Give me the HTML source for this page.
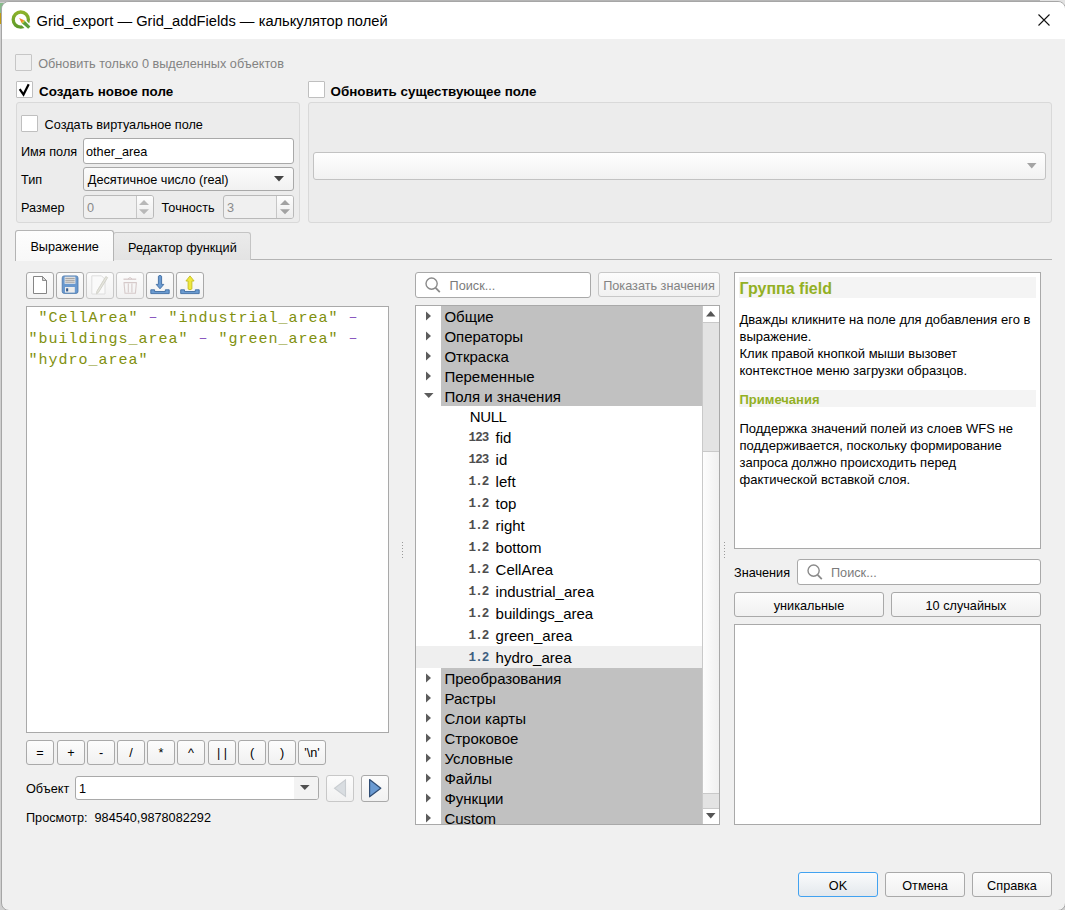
<!DOCTYPE html><html><head><meta charset="utf-8"><style>
html,body{margin:0;padding:0;}
body{width:1065px;height:910px;overflow:hidden;position:relative;background:#f0f0f0;font-family:"Liberation Sans",sans-serif;}
.r{position:absolute;box-sizing:border-box;}
.t{position:absolute;white-space:pre;}
svg{position:absolute;overflow:visible;}
</style></head><body>

<div class="r" style="left:0px;top:0px;width:1065px;height:910px;background:#cfcfcf;"></div>
<div class="r" style="left:0px;top:0px;width:1065px;height:2px;background:#b4b4b4;"></div>
<div class="r" style="left:1040px;top:0px;width:25px;height:14px;background:#e2e2e2;"></div>
<div class="r" style="left:0px;top:3px;width:6px;height:10px;background:#86bb8a;"></div>
<div class="r" style="left:0px;top:13px;width:2px;height:11px;background:#bf9a12;"></div>
<div class="r" style="left:1px;top:1px;width:1065px;height:910px;border:1px solid #a6a6a6;border-radius:8px;background:#f0f0f0;overflow:hidden;"></div>
<div class="r" style="left:2px;top:2px;width:1063px;height:37px;background:#fff;border-top-left-radius:7px;border-top-right-radius:7px;"></div>
<svg style="left:0;top:0" width="60" height="40">
<defs><linearGradient id="qg" x1="0" y1="0" x2="0" y2="1"><stop offset="0" stop-color="#8db32a"/><stop offset="1" stop-color="#5e9a2a"/></linearGradient></defs>
<circle cx="20.8" cy="19.6" r="7.6" fill="none" stroke="url(#qg)" stroke-width="3.3"/>
<path d="M19.5 18.3 L31 29.8" stroke="#fff" stroke-width="6.6"/>
<path d="M21.6 22.9 L24.2 20.3 L30.4 26.5 L28.2 28.8 Z" fill="#5c9d3c"/>
<path d="M19.1 17.9 L21.6 22.9 L24.2 20.3 Z" fill="#f0872a"/>
<path d="M21.9 22.6 L23.9 20.6 L24.9 21.6 L22.9 23.6 Z" fill="#c9cf3e"/>
</svg>
<div class="t" style="left:36.6px;top:12px;font-size:14.7px;line-height:18px;color:#000;font-weight:400;font-family:'Liberation Sans',sans-serif;">Grid_export — Grid_addFields — калькулятор полей</div>
<svg style="left:1038px;top:14px" width="12" height="12"><path d="M0.5 0.5 L11.5 11.5 M11.5 0.5 L0.5 11.5" stroke="#111" stroke-width="1.1"/></svg>
<div class="r" style="left:15px;top:54px;width:17px;height:17px;border:1px solid #c6c6c6;border-radius:1px;background:#f0f0f0;"></div>
<div class="t" style="left:38.2px;top:56px;font-size:12.7px;line-height:16px;color:#838383;font-weight:400;font-family:'Liberation Sans',sans-serif;">Обновить только 0 выделенных объектов</div>
<div class="r" style="left:16px;top:81px;width:17px;height:17px;border:1px solid #bfbfbf;border-radius:1px;background:#fff;"></div>
<svg style="left:16px;top:81px" width="17" height="17"><path d="M3.7 8.1 L7.5 13.6 L12.7 3.3" fill="none" stroke="#000" stroke-width="2.2"/></svg>
<div class="t" style="left:39px;top:83px;font-size:13.4px;line-height:17px;color:#000;font-weight:700;font-family:'Liberation Sans',sans-serif;">Создать новое поле</div>
<div class="r" style="left:308px;top:81px;width:17px;height:17px;border:1px solid #bfbfbf;border-radius:1px;background:#fff;"></div>
<div class="t" style="left:330.6px;top:83px;font-size:13.4px;line-height:17px;color:#000;font-weight:700;font-family:'Liberation Sans',sans-serif;">Обновить существующее поле</div>
<div class="r" style="left:16px;top:102px;width:284px;height:121px;border:1px solid #d9d9d9;border-radius:3px;background:#ececec;"></div>
<div class="r" style="left:308px;top:102px;width:744px;height:121px;border:1px solid #d9d9d9;border-radius:3px;background:#ececec;"></div>
<div class="r" style="left:21px;top:115px;width:17px;height:17px;border:1px solid #bfbfbf;border-radius:1px;background:#fff;"></div>
<div class="t" style="left:44.6px;top:117px;font-size:12.7px;line-height:16px;color:#000;font-weight:400;font-family:'Liberation Sans',sans-serif;">Создать виртуальное поле</div>
<div class="t" style="left:21px;top:144px;font-size:12.7px;line-height:16px;color:#000;font-weight:400;font-family:'Liberation Sans',sans-serif;">Имя поля</div>
<div class="r" style="left:83px;top:138px;width:211px;height:26px;border:1px solid #a9a9a9;border-radius:3px;background:#fff;"></div>
<div class="t" style="left:86px;top:144px;font-size:12.7px;line-height:16px;color:#000;font-weight:400;font-family:'Liberation Sans',sans-serif;">other_area</div>
<div class="t" style="left:21px;top:172px;font-size:12.7px;line-height:16px;color:#000;font-weight:400;font-family:'Liberation Sans',sans-serif;">Тип</div>
<div class="r" style="left:83px;top:167px;width:211px;height:24px;border:1px solid #a9a9a9;border-radius:3px;background:linear-gradient(#fcfcfc,#f1f1f1);"></div>
<div class="t" style="left:87.8px;top:172px;font-size:12.7px;line-height:16px;color:#000;font-weight:400;font-family:'Liberation Sans',sans-serif;">Десятичное число (real)</div>
<svg style="left:274px;top:176px" width="10" height="6"><path d="M0 0 L10 0 L5 5.5 Z" fill="#444"/></svg>
<div class="t" style="left:21px;top:200px;font-size:12.7px;line-height:16px;color:#000;font-weight:400;font-family:'Liberation Sans',sans-serif;">Размер</div>
<div class="r" style="left:83px;top:195px;width:71px;height:24px;border:1px solid #b9b9b9;border-radius:3px;background:#f0f0f0;"></div>
<div class="r" style="left:137px;top:196px;width:16px;height:22px;background:linear-gradient(#fdfdfd,#ececec);border-radius:0 2px 2px 0;"></div>
<div class="r" style="left:136px;top:196px;width:1px;height:22px;background:#c6c6c6;"></div>
<div class="t" style="left:87px;top:200px;font-size:12.7px;line-height:16px;color:#8a8a8a;font-weight:400;font-family:'Liberation Sans',sans-serif;">0</div>
<svg style="left:138.7px;top:199px" width="10" height="16"><path d="M0 6 L5 1 L10 6 Z" fill="#b8b8b8"/><path d="M0 10.2 L5 15.2 L10 10.2 Z" fill="#b8b8b8"/></svg>
<div class="t" style="left:161.6px;top:200px;font-size:12.7px;line-height:16px;color:#000;font-weight:400;font-family:'Liberation Sans',sans-serif;">Точность</div>
<div class="r" style="left:223px;top:195px;width:71px;height:24px;border:1px solid #b9b9b9;border-radius:3px;background:#f0f0f0;"></div>
<div class="r" style="left:277px;top:196px;width:16px;height:22px;background:linear-gradient(#fdfdfd,#ececec);border-radius:0 2px 2px 0;"></div>
<div class="r" style="left:276px;top:196px;width:1px;height:22px;background:#c6c6c6;"></div>
<div class="t" style="left:227px;top:200px;font-size:12.7px;line-height:16px;color:#8a8a8a;font-weight:400;font-family:'Liberation Sans',sans-serif;">3</div>
<svg style="left:279.6px;top:199px" width="10" height="16"><path d="M0 6 L5 1 L10 6 Z" fill="#a2a2a2"/><path d="M0 10.2 L5 15.2 L10 10.2 Z" fill="#a2a2a2"/></svg>
<div class="r" style="left:313px;top:152px;width:733px;height:28px;border:1px solid #c2c2c2;border-radius:3px;background:linear-gradient(#fefefe,#f1f1f1);"></div>
<svg style="left:1027px;top:163px" width="10" height="6"><path d="M0 0 L9.5 0 L4.75 5.5 Z" fill="#a4a4a4"/></svg>
<div class="r" style="left:251px;top:259px;width:801px;height:1px;background:#b4b4b4;"></div>
<div class="r" style="left:113px;top:232px;width:138px;height:28px;border:1px solid #c4c4c4;border-bottom:none;border-radius:3px 3px 0 0;background:linear-gradient(#ebebeb,#e3e3e3);"></div>
<div class="r" style="left:15px;top:230px;width:99px;height:31px;border:1px solid #b4b4b4;border-bottom:none;border-radius:3px 3px 0 0;background:linear-gradient(#fdfdfd,#f8f8f8);"></div>
<div class="t" style="left:30.4px;top:239px;font-size:12.7px;line-height:16px;color:#000;font-weight:400;font-family:'Liberation Sans',sans-serif;">Выражение</div>
<div class="t" style="left:128px;top:240px;font-size:12.7px;line-height:16px;color:#000;font-weight:400;font-family:'Liberation Sans',sans-serif;">Редактор функций</div>
<div class="r" style="left:26px;top:272px;width:28px;height:27px;border:1px solid #a9a9a9;border-radius:3px;background:linear-gradient(#fcfcfc,#f1f1f1);"></div>
<div class="r" style="left:56px;top:272px;width:28px;height:27px;border:1px solid #a9a9a9;border-radius:3px;background:linear-gradient(#fcfcfc,#f1f1f1);"></div>
<div class="r" style="left:86px;top:272px;width:28px;height:27px;border:1px solid #c8c8c8;border-radius:3px;background:linear-gradient(#fcfcfc,#f1f1f1);"></div>
<div class="r" style="left:116px;top:272px;width:28px;height:27px;border:1px solid #c8c8c8;border-radius:3px;background:linear-gradient(#fcfcfc,#f1f1f1);"></div>
<div class="r" style="left:146px;top:272px;width:28px;height:27px;border:1px solid #a9a9a9;border-radius:3px;background:linear-gradient(#fcfcfc,#f1f1f1);"></div>
<div class="r" style="left:176px;top:272px;width:28px;height:27px;border:1px solid #a9a9a9;border-radius:3px;background:linear-gradient(#fcfcfc,#f1f1f1);"></div>
<svg style="left:0;top:0" width="210" height="300">
<path d="M33.5 276.5 H42.5 L46.5 280.5 V293.5 H33.5 Z" fill="#fff" stroke="#858585" stroke-width="1" stroke-linejoin="round"/>
<path d="M42.5 276.5 V280.5 H46.5 Z" fill="#d8d8d8" stroke="#858585" stroke-width="0.9" stroke-linejoin="round"/>
<rect x="62.2" y="275.9" width="15.8" height="17.5" rx="2" fill="#6a99cf" stroke="#4a76aa" stroke-width="0.8"/>
<rect x="64.6" y="276.7" width="10.8" height="7.1" fill="#e6e6e6"/>
<path d="M65.3 278.4 H74.7 M65.3 280.3 H74.7 M65.3 282.2 H74.7" stroke="#8c8c8c" stroke-width="0.8"/>
<rect x="65" y="287" width="9.8" height="5.6" fill="#ececec"/>
<rect x="66.1" y="288.3" width="2.1" height="3.1" fill="#34598a"/>
<path d="M91.8 275.8 H101.5 L105 279.3 V294 H91.8 Z" fill="#fafafa" stroke="#dedede" stroke-width="1"/>
<path d="M107.6 277.6 L98.6 292.2 L96.6 293.8 L96.8 291.4 L105.8 276.6 Z" fill="#e6e6de" stroke="#cacac2" stroke-width="0.8" stroke-linejoin="round"/>
<path d="M104.6 278.6 L97.7 290" stroke="#d6d6ce" stroke-width="0.6"/>
<path d="M123.5 279.2 H136.2" stroke="#d6caca" stroke-width="1.3"/>
<path d="M128 278.8 Q130 276.2 132 278.8" fill="none" stroke="#d6caca" stroke-width="1"/>
<path d="M124 282.6 H136.4 L135.4 293.2 H125 Z" fill="none" stroke="#d6caca" stroke-width="1.1" stroke-linejoin="round"/>
<path d="M128.3 283.5 V292.5 M131.9 283.5 V292.5" stroke="#d6caca" stroke-width="1.1"/>
<path d="M158.4 276.2 Q160 274.4 161.6 276.2 V284.4 H163.8 L160 288.8 L156.2 284.4 H158.4 Z" fill="#6b9bd1" stroke="#3f6da3" stroke-width="0.9" stroke-linejoin="round"/>
<path d="M150.8 289.8 H154.6 V291.5 H165.3 V289.8 H169.2 V293.6 H150.8 Z" fill="#6b9bd1" stroke="#3f6da3" stroke-width="0.9" stroke-linejoin="round"/>
<path d="M190 275.9 L194.1 281 H191.9 V288.9 Q190 290.6 188.1 288.9 V281 H185.9 Z" fill="#efe83c" stroke="#c4bd22" stroke-width="0.9" stroke-linejoin="round"/>
<path d="M180.7 289.8 H184.5 V291.5 H195.3 V289.8 H199.2 V293.6 H180.7 Z" fill="#6b9bd1" stroke="#3f6da3" stroke-width="0.9" stroke-linejoin="round"/>
</svg>
<div class="r" style="left:26px;top:306px;width:363px;height:427px;border:1px solid #a9a9a9;background:#fff;"></div>
<div class="t" style="left:28.4px;top:309px;font-size:15px;line-height:19px;color:#000;font-weight:400;font-family:'Liberation Mono',sans-serif;letter-spacing:1px;"><span style="color:#7f900e"> "CellArea" </span><span style="color:#8a58c0;position:relative;top:-1px">–</span><span style="color:#7f900e"> "industrial_area" </span><span style="color:#8a58c0;position:relative;top:-1px">–</span></div>
<div class="t" style="left:28.4px;top:330px;font-size:15px;line-height:19px;color:#000;font-weight:400;font-family:'Liberation Mono',sans-serif;letter-spacing:1px;"><span style="color:#7f900e">"buildings_area" </span><span style="color:#8a58c0;position:relative;top:-1px">–</span><span style="color:#7f900e"> "green_area" </span><span style="color:#8a58c0;position:relative;top:-1px">–</span></div>
<div class="t" style="left:28.4px;top:351px;font-size:15px;line-height:19px;color:#000;font-weight:400;font-family:'Liberation Mono',sans-serif;letter-spacing:1px;"><span style="color:#7f900e">"hydro_area"</span></div>
<div class="r" style="left:26px;top:740px;width:28px;height:25px;border:1px solid #a9a9a9;border-radius:3px;background:linear-gradient(#fcfcfc,#f1f1f1);"></div>
<div class="t" style="left:26px;width:28px;text-align:center;top:745px;font-size:12.7px;line-height:16px;color:#000;font-weight:400;">=</div>
<div class="r" style="left:57px;top:740px;width:28px;height:25px;border:1px solid #a9a9a9;border-radius:3px;background:linear-gradient(#fcfcfc,#f1f1f1);"></div>
<div class="t" style="left:57px;width:28px;text-align:center;top:745px;font-size:12.7px;line-height:16px;color:#000;font-weight:400;">+</div>
<div class="r" style="left:87px;top:740px;width:28px;height:25px;border:1px solid #a9a9a9;border-radius:3px;background:linear-gradient(#fcfcfc,#f1f1f1);"></div>
<div class="t" style="left:87px;width:28px;text-align:center;top:745px;font-size:12.7px;line-height:16px;color:#000;font-weight:400;">-</div>
<div class="r" style="left:117px;top:740px;width:28px;height:25px;border:1px solid #a9a9a9;border-radius:3px;background:linear-gradient(#fcfcfc,#f1f1f1);"></div>
<div class="t" style="left:117px;width:28px;text-align:center;top:745px;font-size:12.7px;line-height:16px;color:#000;font-weight:400;">/</div>
<div class="r" style="left:147px;top:740px;width:28px;height:25px;border:1px solid #a9a9a9;border-radius:3px;background:linear-gradient(#fcfcfc,#f1f1f1);"></div>
<div class="t" style="left:147px;width:28px;text-align:center;top:745px;font-size:12.7px;line-height:16px;color:#000;font-weight:400;">*</div>
<div class="r" style="left:177px;top:740px;width:28px;height:25px;border:1px solid #a9a9a9;border-radius:3px;background:linear-gradient(#fcfcfc,#f1f1f1);"></div>
<div class="t" style="left:177px;width:28px;text-align:center;top:745px;font-size:12.7px;line-height:16px;color:#000;font-weight:400;">^</div>
<div class="r" style="left:208px;top:740px;width:28px;height:25px;border:1px solid #a9a9a9;border-radius:3px;background:linear-gradient(#fcfcfc,#f1f1f1);"></div>
<div class="t" style="left:208px;width:28px;text-align:center;top:745px;font-size:12.7px;line-height:16px;color:#000;font-weight:400;">| |</div>
<div class="r" style="left:238px;top:740px;width:28px;height:25px;border:1px solid #a9a9a9;border-radius:3px;background:linear-gradient(#fcfcfc,#f1f1f1);"></div>
<div class="t" style="left:238px;width:28px;text-align:center;top:745px;font-size:12.7px;line-height:16px;color:#000;font-weight:400;">(</div>
<div class="r" style="left:268px;top:740px;width:28px;height:25px;border:1px solid #a9a9a9;border-radius:3px;background:linear-gradient(#fcfcfc,#f1f1f1);"></div>
<div class="t" style="left:268px;width:28px;text-align:center;top:745px;font-size:12.7px;line-height:16px;color:#000;font-weight:400;">)</div>
<div class="r" style="left:298px;top:740px;width:28px;height:25px;border:1px solid #a9a9a9;border-radius:3px;background:linear-gradient(#fcfcfc,#f1f1f1);"></div>
<div class="t" style="left:298px;width:28px;text-align:center;top:745px;font-size:12.7px;line-height:16px;color:#000;font-weight:400;">'\n'</div>
<div class="t" style="left:26px;top:781px;font-size:12.7px;line-height:16px;color:#000;font-weight:400;font-family:'Liberation Sans',sans-serif;">Объект</div>
<div class="r" style="left:75px;top:776px;width:244px;height:24px;border:1px solid #a9a9a9;border-radius:3px;background:#fff;"></div>
<div class="r" style="left:294px;top:777px;width:24px;height:22px;background:#f3f3f3;border-radius:0 2px 2px 0;"></div>
<div class="t" style="left:79px;top:781px;font-size:12.7px;line-height:16px;color:#000;font-weight:400;font-family:'Liberation Sans',sans-serif;">1</div>
<svg style="left:299.7px;top:785.3px" width="10" height="6"><path d="M0 0 L9.6 0 L4.8 5.1 Z" fill="#505050"/></svg>
<div class="r" style="left:326px;top:775px;width:28px;height:27px;border:1px solid #c8c8c8;border-radius:3px;background:linear-gradient(#fcfcfc,#f1f1f1);"></div>
<svg style="left:0;top:0" width="400" height="820"><path d="M345.5 779.8 V796.5 L334.5 788.2 Z" fill="#d9dde1" stroke="#c9cdd1" stroke-width="1.1"/></svg>
<div class="r" style="left:361px;top:775px;width:28px;height:27px;border:1px solid #a9a9a9;border-radius:3px;background:linear-gradient(#fcfcfc,#f1f1f1);"></div>
<svg style="left:0;top:0" width="400" height="820"><path d="M369.6 779.6 V796.8 L380.8 788.2 Z" fill="#6b9bd2" stroke="#2f4c73" stroke-width="1.2" stroke-linejoin="round"/></svg>
<div class="t" style="left:26px;top:810px;font-size:12.7px;line-height:16px;color:#000;font-weight:400;font-family:'Liberation Sans',sans-serif;">Просмотр:  984540,9878082292</div>
<div class="r" style="left:402px;top:542px;width:1px;height:1px;background:#9a9a9a;"></div>
<div class="r" style="left:724px;top:542px;width:1px;height:1px;background:#9a9a9a;"></div>
<div class="r" style="left:402px;top:545px;width:1px;height:1px;background:#9a9a9a;"></div>
<div class="r" style="left:724px;top:545px;width:1px;height:1px;background:#9a9a9a;"></div>
<div class="r" style="left:402px;top:548px;width:1px;height:1px;background:#9a9a9a;"></div>
<div class="r" style="left:724px;top:548px;width:1px;height:1px;background:#9a9a9a;"></div>
<div class="r" style="left:402px;top:551px;width:1px;height:1px;background:#9a9a9a;"></div>
<div class="r" style="left:724px;top:551px;width:1px;height:1px;background:#9a9a9a;"></div>
<div class="r" style="left:402px;top:554px;width:1px;height:1px;background:#9a9a9a;"></div>
<div class="r" style="left:724px;top:554px;width:1px;height:1px;background:#9a9a9a;"></div>
<div class="r" style="left:402px;top:557px;width:1px;height:1px;background:#9a9a9a;"></div>
<div class="r" style="left:724px;top:557px;width:1px;height:1px;background:#9a9a9a;"></div>
<div class="r" style="left:415px;top:272px;width:176px;height:26px;border:1px solid #a9a9a9;border-radius:3px;background:#fff;"></div>
<svg style="left:424px;top:276px" width="16" height="18"><circle cx="7.6" cy="7.6" r="5.6" fill="none" stroke="#8a8a8a" stroke-width="1.4"/><path d="M11.6 11.8 L15.8 16.2" stroke="#8a8a8a" stroke-width="1.8"/></svg>
<div class="t" style="left:449.6px;top:278px;font-size:12.7px;line-height:16px;color:#7b7b7b;font-weight:400;font-family:'Liberation Sans',sans-serif;">Поиск...</div>
<div class="r" style="left:598px;top:272px;width:122px;height:25px;border:1px solid #c8c8c8;border-radius:3px;background:linear-gradient(#fcfcfc,#f1f1f1);"></div>
<div class="t" style="left:598px;width:122px;text-align:center;top:278px;font-size:12.7px;line-height:16px;color:#838383;font-weight:400;">Показать значения</div>
<div class="r" style="left:415px;top:305px;width:305px;height:520px;border:1px solid #a9a9a9;background:#fff;"></div>
<div class="r" style="left:441px;top:306px;width:261px;height:20px;background:#c1c1c1;"></div>
<div class="t" style="left:444.4px;top:307px;font-size:15px;line-height:19px;color:#000;font-weight:400;font-family:'Liberation Sans',sans-serif;">Общие</div>
<svg style="left:426px;top:311px" width="6" height="10"><path d="M0 0.5 L5 5 L0 9.5 Z" fill="#5c5c5c"/></svg>
<div class="r" style="left:441px;top:326px;width:261px;height:20px;background:#c1c1c1;"></div>
<div class="t" style="left:444.4px;top:327px;font-size:15px;line-height:19px;color:#000;font-weight:400;font-family:'Liberation Sans',sans-serif;">Операторы</div>
<svg style="left:426px;top:331px" width="6" height="10"><path d="M0 0.5 L5 5 L0 9.5 Z" fill="#5c5c5c"/></svg>
<div class="r" style="left:441px;top:346px;width:261px;height:20px;background:#c1c1c1;"></div>
<div class="t" style="left:444.4px;top:347px;font-size:15px;line-height:19px;color:#000;font-weight:400;font-family:'Liberation Sans',sans-serif;">Откраска</div>
<svg style="left:426px;top:351px" width="6" height="10"><path d="M0 0.5 L5 5 L0 9.5 Z" fill="#5c5c5c"/></svg>
<div class="r" style="left:441px;top:366px;width:261px;height:20px;background:#c1c1c1;"></div>
<div class="t" style="left:444.4px;top:367px;font-size:15px;line-height:19px;color:#000;font-weight:400;font-family:'Liberation Sans',sans-serif;">Переменные</div>
<svg style="left:426px;top:371px" width="6" height="10"><path d="M0 0.5 L5 5 L0 9.5 Z" fill="#5c5c5c"/></svg>
<div class="r" style="left:441px;top:386px;width:261px;height:20px;background:#c1c1c1;"></div>
<div class="t" style="left:444.4px;top:387px;font-size:15px;line-height:19px;color:#000;font-weight:400;font-family:'Liberation Sans',sans-serif;">Поля и значения</div>
<svg style="left:424px;top:393px" width="10" height="6"><path d="M0 0 L9.5 0 L4.75 5 Z" fill="#5c5c5c"/></svg>
<div class="t" style="left:469.8px;top:407px;font-size:15px;line-height:19px;color:#000;font-weight:400;font-family:'Liberation Sans',sans-serif;letter-spacing:-0.4px;">NULL</div>
<div class="t" style="left:468.6px;top:430px;font-size:12.5px;line-height:16px;color:#4e4e4e;font-weight:700;font-family:'Liberation Mono',sans-serif;letter-spacing:-0.9px;">123</div>
<div class="t" style="left:495.6px;top:428px;font-size:15px;line-height:19px;color:#000;font-weight:400;font-family:'Liberation Sans',sans-serif;">fid</div>
<div class="t" style="left:468.6px;top:452px;font-size:12.5px;line-height:16px;color:#4e4e4e;font-weight:700;font-family:'Liberation Mono',sans-serif;letter-spacing:-0.9px;">123</div>
<div class="t" style="left:495.6px;top:450px;font-size:15px;line-height:19px;color:#000;font-weight:400;font-family:'Liberation Sans',sans-serif;">id</div>
<div class="t" style="left:468.6px;top:474px;font-size:12.5px;line-height:16px;color:#4e4e4e;font-weight:700;font-family:'Liberation Mono',sans-serif;letter-spacing:-0.9px;">1.2</div>
<div class="t" style="left:495.6px;top:472px;font-size:15px;line-height:19px;color:#000;font-weight:400;font-family:'Liberation Sans',sans-serif;">left</div>
<div class="t" style="left:468.6px;top:496px;font-size:12.5px;line-height:16px;color:#4e4e4e;font-weight:700;font-family:'Liberation Mono',sans-serif;letter-spacing:-0.9px;">1.2</div>
<div class="t" style="left:495.6px;top:494px;font-size:15px;line-height:19px;color:#000;font-weight:400;font-family:'Liberation Sans',sans-serif;">top</div>
<div class="t" style="left:468.6px;top:518px;font-size:12.5px;line-height:16px;color:#4e4e4e;font-weight:700;font-family:'Liberation Mono',sans-serif;letter-spacing:-0.9px;">1.2</div>
<div class="t" style="left:495.6px;top:516px;font-size:15px;line-height:19px;color:#000;font-weight:400;font-family:'Liberation Sans',sans-serif;">right</div>
<div class="t" style="left:468.6px;top:540px;font-size:12.5px;line-height:16px;color:#4e4e4e;font-weight:700;font-family:'Liberation Mono',sans-serif;letter-spacing:-0.9px;">1.2</div>
<div class="t" style="left:495.6px;top:538px;font-size:15px;line-height:19px;color:#000;font-weight:400;font-family:'Liberation Sans',sans-serif;">bottom</div>
<div class="t" style="left:468.6px;top:562px;font-size:12.5px;line-height:16px;color:#4e4e4e;font-weight:700;font-family:'Liberation Mono',sans-serif;letter-spacing:-0.9px;">1.2</div>
<div class="t" style="left:495.6px;top:560px;font-size:15px;line-height:19px;color:#000;font-weight:400;font-family:'Liberation Sans',sans-serif;">CellArea</div>
<div class="t" style="left:468.6px;top:584px;font-size:12.5px;line-height:16px;color:#4e4e4e;font-weight:700;font-family:'Liberation Mono',sans-serif;letter-spacing:-0.9px;">1.2</div>
<div class="t" style="left:495.6px;top:582px;font-size:15px;line-height:19px;color:#000;font-weight:400;font-family:'Liberation Sans',sans-serif;">industrial_area</div>
<div class="t" style="left:468.6px;top:606px;font-size:12.5px;line-height:16px;color:#4e4e4e;font-weight:700;font-family:'Liberation Mono',sans-serif;letter-spacing:-0.9px;">1.2</div>
<div class="t" style="left:495.6px;top:604px;font-size:15px;line-height:19px;color:#000;font-weight:400;font-family:'Liberation Sans',sans-serif;">buildings_area</div>
<div class="t" style="left:468.6px;top:628px;font-size:12.5px;line-height:16px;color:#4e4e4e;font-weight:700;font-family:'Liberation Mono',sans-serif;letter-spacing:-0.9px;">1.2</div>
<div class="t" style="left:495.6px;top:626px;font-size:15px;line-height:19px;color:#000;font-weight:400;font-family:'Liberation Sans',sans-serif;">green_area</div>
<div class="r" style="left:416px;top:646px;width:286px;height:22px;background:#efefef;"></div>
<div class="t" style="left:468.6px;top:650px;font-size:12.5px;line-height:16px;color:#3e5f80;font-weight:700;font-family:'Liberation Mono',sans-serif;letter-spacing:-0.9px;">1.2</div>
<div class="t" style="left:495.6px;top:648px;font-size:15px;line-height:19px;color:#000;font-weight:400;font-family:'Liberation Sans',sans-serif;">hydro_area</div>
<div class="r" style="left:441px;top:668px;width:261px;height:20px;background:#c1c1c1;"></div>
<div class="t" style="left:444.4px;top:669px;font-size:15px;line-height:19px;color:#000;font-weight:400;font-family:'Liberation Sans',sans-serif;">Преобразования</div>
<svg style="left:426px;top:673px" width="6" height="10"><path d="M0 0.5 L5 5 L0 9.5 Z" fill="#5c5c5c"/></svg>
<div class="r" style="left:441px;top:688px;width:261px;height:20px;background:#c1c1c1;"></div>
<div class="t" style="left:444.4px;top:689px;font-size:15px;line-height:19px;color:#000;font-weight:400;font-family:'Liberation Sans',sans-serif;">Растры</div>
<svg style="left:426px;top:693px" width="6" height="10"><path d="M0 0.5 L5 5 L0 9.5 Z" fill="#5c5c5c"/></svg>
<div class="r" style="left:441px;top:708px;width:261px;height:20px;background:#c1c1c1;"></div>
<div class="t" style="left:444.4px;top:709px;font-size:15px;line-height:19px;color:#000;font-weight:400;font-family:'Liberation Sans',sans-serif;">Слои карты</div>
<svg style="left:426px;top:713px" width="6" height="10"><path d="M0 0.5 L5 5 L0 9.5 Z" fill="#5c5c5c"/></svg>
<div class="r" style="left:441px;top:728px;width:261px;height:20px;background:#c1c1c1;"></div>
<div class="t" style="left:444.4px;top:729px;font-size:15px;line-height:19px;color:#000;font-weight:400;font-family:'Liberation Sans',sans-serif;">Строковое</div>
<svg style="left:426px;top:733px" width="6" height="10"><path d="M0 0.5 L5 5 L0 9.5 Z" fill="#5c5c5c"/></svg>
<div class="r" style="left:441px;top:748px;width:261px;height:20px;background:#c1c1c1;"></div>
<div class="t" style="left:444.4px;top:749px;font-size:15px;line-height:19px;color:#000;font-weight:400;font-family:'Liberation Sans',sans-serif;">Условные</div>
<svg style="left:426px;top:753px" width="6" height="10"><path d="M0 0.5 L5 5 L0 9.5 Z" fill="#5c5c5c"/></svg>
<div class="r" style="left:441px;top:768px;width:261px;height:20px;background:#c1c1c1;"></div>
<div class="t" style="left:444.4px;top:769px;font-size:15px;line-height:19px;color:#000;font-weight:400;font-family:'Liberation Sans',sans-serif;">Файлы</div>
<svg style="left:426px;top:773px" width="6" height="10"><path d="M0 0.5 L5 5 L0 9.5 Z" fill="#5c5c5c"/></svg>
<div class="r" style="left:441px;top:788px;width:261px;height:20px;background:#c1c1c1;"></div>
<div class="t" style="left:444.4px;top:789px;font-size:15px;line-height:19px;color:#000;font-weight:400;font-family:'Liberation Sans',sans-serif;">Функции</div>
<svg style="left:426px;top:793px" width="6" height="10"><path d="M0 0.5 L5 5 L0 9.5 Z" fill="#5c5c5c"/></svg>
<div class="r" style="left:441px;top:808px;width:261px;height:16px;background:#c1c1c1;"></div>
<div class="t" style="left:444.4px;top:809px;font-size:15px;line-height:19px;color:#000;font-weight:400;font-family:'Liberation Sans',sans-serif;">Custom</div>
<svg style="left:426px;top:813px" width="6" height="10"><path d="M0 0.5 L5 5 L0 9.5 Z" fill="#5c5c5c"/></svg>
<div class="r" style="left:415px;top:824px;width:305px;height:1px;background:#a9a9a9;"></div>
<div class="r" style="left:410px;top:825px;width:315px;height:20px;background:#f0f0f0;"></div>
<div class="r" style="left:702px;top:306px;width:17px;height:518px;background:#e3e3e3;border-left:1px solid #c9c9c9;"></div>
<div class="r" style="left:702px;top:306px;width:17px;height:17px;background:#fff;border-left:1px solid #c9c9c9;border-bottom:1px solid #c9c9c9;"></div>
<svg style="left:706px;top:311px" width="10" height="6"><path d="M0 5.5 L9.5 5.5 L4.75 0 Z" fill="#555"/></svg>
<div class="r" style="left:702px;top:451px;width:17px;height:343px;background:linear-gradient(90deg,#fdfdfd,#f0f0f0);border:1px solid #c9c9c9;border-right:none;"></div>
<div class="r" style="left:702px;top:808px;width:17px;height:16px;background:#fff;border-left:1px solid #c9c9c9;border-top:1px solid #c9c9c9;"></div>
<svg style="left:706px;top:813px" width="10" height="6"><path d="M0 0 L9.5 0 L4.75 5.5 Z" fill="#555"/></svg>
<div class="r" style="left:734px;top:272px;width:307px;height:277px;border:1px solid #a9a9a9;background:#fff;"></div>
<div class="r" style="left:739px;top:277px;width:297px;height:21px;background:#f4f4f4;"></div>
<div class="t" style="left:739.5px;top:279px;font-size:16px;line-height:20px;color:#93b024;font-weight:700;font-family:'Liberation Sans',sans-serif;">Группа field</div>
<div class="t" style="left:739.5px;top:312px;font-size:13px;line-height:16px;color:#000;font-weight:400;font-family:'Liberation Sans',sans-serif;">Дважды кликните на поле для добавления его в</div>
<div class="t" style="left:739.5px;top:329px;font-size:13px;line-height:16px;color:#000;font-weight:400;font-family:'Liberation Sans',sans-serif;">выражение.</div>
<div class="t" style="left:739.5px;top:346px;font-size:13px;line-height:16px;color:#000;font-weight:400;font-family:'Liberation Sans',sans-serif;">Клик правой кнопкой мыши вызовет</div>
<div class="t" style="left:739.5px;top:363px;font-size:13px;line-height:16px;color:#000;font-weight:400;font-family:'Liberation Sans',sans-serif;">контекстное меню загрузки образцов.</div>
<div class="r" style="left:739px;top:390px;width:297px;height:17px;background:#f4f4f4;"></div>
<div class="t" style="left:739.5px;top:392px;font-size:13px;line-height:16px;color:#93b024;font-weight:700;font-family:'Liberation Sans',sans-serif;">Примечания</div>
<div class="t" style="left:739.5px;top:421px;font-size:13px;line-height:16px;color:#000;font-weight:400;font-family:'Liberation Sans',sans-serif;">Поддержка значений полей из слоев WFS не</div>
<div class="t" style="left:739.5px;top:438px;font-size:13px;line-height:16px;color:#000;font-weight:400;font-family:'Liberation Sans',sans-serif;">поддерживается, поскольку формирование</div>
<div class="t" style="left:739.5px;top:455px;font-size:13px;line-height:16px;color:#000;font-weight:400;font-family:'Liberation Sans',sans-serif;">запроса должно происходить перед</div>
<div class="t" style="left:739.5px;top:472px;font-size:13px;line-height:16px;color:#000;font-weight:400;font-family:'Liberation Sans',sans-serif;">фактической вставкой слоя.</div>
<div class="t" style="left:734px;top:565px;font-size:12.7px;line-height:16px;color:#000;font-weight:400;font-family:'Liberation Sans',sans-serif;">Значения</div>
<div class="r" style="left:797px;top:559px;width:244px;height:26px;border:1px solid #a9a9a9;border-radius:3px;background:#fff;"></div>
<svg style="left:806px;top:563px" width="16" height="18"><circle cx="7.6" cy="7.6" r="5.6" fill="none" stroke="#8a8a8a" stroke-width="1.4"/><path d="M11.6 11.8 L15.8 16.2" stroke="#8a8a8a" stroke-width="1.8"/></svg>
<div class="t" style="left:831px;top:565px;font-size:12.7px;line-height:16px;color:#7b7b7b;font-weight:400;font-family:'Liberation Sans',sans-serif;">Поиск...</div>
<div class="r" style="left:734px;top:592px;width:150px;height:25px;border:1px solid #a9a9a9;border-radius:3px;background:linear-gradient(#fcfcfc,#f1f1f1);"></div>
<div class="t" style="left:734px;width:150px;text-align:center;top:598px;font-size:12.7px;line-height:16px;color:#000;font-weight:400;">уникальные</div>
<div class="r" style="left:891px;top:592px;width:150px;height:25px;border:1px solid #a9a9a9;border-radius:3px;background:linear-gradient(#fcfcfc,#f1f1f1);"></div>
<div class="t" style="left:891px;width:150px;text-align:center;top:598px;font-size:12.7px;line-height:16px;color:#000;font-weight:400;">10 случайных</div>
<div class="r" style="left:734px;top:624px;width:307px;height:201px;border:1px solid #a9a9a9;background:#fff;"></div>
<div class="r" style="left:798px;top:872px;width:80px;height:25px;border:1px solid #42a2f0;border-radius:3px;background:linear-gradient(#fafbfc,#e3e8ed);"></div>
<div class="t" style="left:798px;width:80px;text-align:center;top:878px;font-size:12.7px;line-height:16px;color:#000;font-weight:400;">OK</div>
<div class="r" style="left:885px;top:872px;width:80px;height:25px;border:1px solid #a9a9a9;border-radius:3px;background:linear-gradient(#fcfcfc,#f1f1f1);"></div>
<div class="t" style="left:885px;width:80px;text-align:center;top:878px;font-size:12.7px;line-height:16px;color:#000;font-weight:400;">Отмена</div>
<div class="r" style="left:972px;top:872px;width:80px;height:25px;border:1px solid #a9a9a9;border-radius:3px;background:linear-gradient(#fcfcfc,#f1f1f1);"></div>
<div class="t" style="left:972px;width:80px;text-align:center;top:878px;font-size:12.7px;line-height:16px;color:#000;font-weight:400;">Справка</div>
</body></html>
